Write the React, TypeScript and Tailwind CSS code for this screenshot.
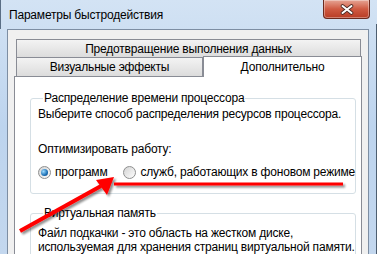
import React from 'react';

const Radio: React.FC<{ checked?: boolean }> = ({ checked }) => (
  <span className="relative w-[13px] h-[13px] rounded-full border border-[#8e8f8f] bg-gradient-to-br from-[#d4d4d4] to-[#fdfdfd] flex items-center justify-center shrink-0">
    {checked && (
      <span className="w-[7px] h-[7px] rounded-full bg-[radial-gradient(circle_at_35%_35%,#9fdcff,#1a6fb5_60%,#0b3f7a)]" />
    )}
  </span>
);

const GroupBox: React.FC<{ title: string; className?: string; children: React.ReactNode }> = ({ title, className, children }) => (
  <fieldset className={'border border-[#d5dfe5] rounded-[3px] ' + (className || '')}>
    <legend className="ml-[5px] px-[1px] leading-[15px]">{title}</legend>
    {children}
  </fieldset>
);

export default function App() {
  return (
    <div
      className="relative w-[377px] h-[254px] overflow-hidden bg-gradient-to-b from-[#d3e3f4] via-[#bdd4ee] to-[#c3d7ee] text-[12px] text-black whitespace-nowrap tracking-[-0.2px]"
      style={{ fontFamily: '"Liberation Sans", Arial, sans-serif' }}
    >
      {/* Title bar */}
      <div className="h-[29px] flex items-start justify-between border-l border-[#5a6e85]">
        <div className="pl-[8px] pt-[7px] leading-[16px] text-[12px]">Параметры быстродействия</div>
        <button className="mr-[7px] w-[47px] h-[19px] rounded-b-[4px] border border-t-0 border-[#6b2a1e] bg-gradient-to-b from-[#e5a494] via-[#cf5a42] to-[#b83c24] flex items-center justify-center shadow-[inset_0_0_0_1px_rgba(255,255,255,0.35)]">
          <svg width="14" height="11" viewBox="0 0 14 11">
            <path d="M2.5 2 L11.5 9 M11.5 2 L2.5 9" stroke="#4a2a24" strokeWidth="3.6" strokeLinecap="round" />
            <path d="M2.5 2 L11.5 9 M11.5 2 L2.5 9" stroke="#ffffff" strokeWidth="2" strokeLinecap="round" />
          </svg>
        </button>
      </div>

      {/* Client area */}
      <div className="ml-[7px] w-[362px] h-[240px] border border-[#7d8ea3] bg-[#f0f0f0] pl-[6px] pt-[9px]">
        {/* Tabs */}
        <div className="pl-[2px] w-[348px]">
          <div className="w-[345px] h-[18px] border border-[#898c95] border-b-0 bg-gradient-to-b from-[#f3f3f3] to-[#dcdcdc] flex items-center justify-center leading-[16px]">
            Предотвращение выполнения данных
          </div>
          <div className="flex items-end h-[19px]">
            <div className="w-[187px] h-[19px] border border-[#898c95] border-b-0 bg-gradient-to-b from-[#f3f3f3] to-[#dcdcdc] flex items-center justify-center leading-[16px]">
              Визуальные эффекты
            </div>
            <div className="relative z-10 w-[159px] h-[21px] mb-[-1px] border border-[#898c95] border-b-0 bg-white flex items-start justify-center pt-[2px] leading-[16px]">
              Дополнительно
            </div>
          </div>
        </div>

        {/* Tab panel */}
        <div className="w-[348px] h-[200px] border border-[#898c95] bg-white px-[15px] pt-[14px]">
          <GroupBox title="Распределение времени процессора" className="w-[318px] h-[103px] pl-[7px]">
            <div className="leading-[15px] mt-[1px]">Выберите способ распределения ресурсов процессора.</div>
            <div className="leading-[15px] mt-[20px]">Оптимизировать работу:</div>
            <div className="flex items-center mt-[8px] h-[15px]">
              <Radio checked />
              <span className="ml-[4px] leading-[15px]">программ</span>
              <span className="ml-[16px]"><Radio /></span>
              <span className="ml-[4px] leading-[15px]">служб, работающих в фоновом режиме</span>
            </div>
          </GroupBox>
          <GroupBox title="Виртуальная память" className="w-[318px] h-[80px] pl-[7px] mt-[12px]">
            <div className="leading-[14px] mt-[5px]">Файл подкачки - это область на жестком диске,</div>
            <div className="leading-[14px]">используемая для хранения страниц виртуальной памяти.</div>
          </GroupBox>
        </div>
      </div>

      {/* Right frame edge */}
      <div className="absolute top-[24px] right-0 w-[1px] h-[230px] bg-[#4d5e70]" />

      {/* Red annotation overlay */}
      <svg className="absolute inset-0 pointer-events-none" width="377" height="254" viewBox="0 0 377 254">
        <defs>
          <filter id="sh" x="-10%" y="-30%" width="130%" height="180%">
            <feGaussianBlur in="SourceAlpha" stdDeviation="1.2" />
            <feOffset dx="2" dy="2" result="b" />
            <feComponentTransfer>
              <feFuncA type="linear" slope="0.45" />
            </feComponentTransfer>
            <feMerge>
              <feMergeNode />
              <feMergeNode in="SourceGraphic" />
            </feMerge>
          </filter>
        </defs>
        <g filter="url(#sh)">
          <line x1="114" y1="184" x2="343" y2="184" stroke="#ff0000" strokeWidth="3" />
          <line x1="20" y1="231" x2="101" y2="186" stroke="#ff0000" strokeWidth="4" />
          <polygon points="114,177 96,180 107,195" fill="#ff0000" />
        </g>
      </svg>
    </div>
  );
}
